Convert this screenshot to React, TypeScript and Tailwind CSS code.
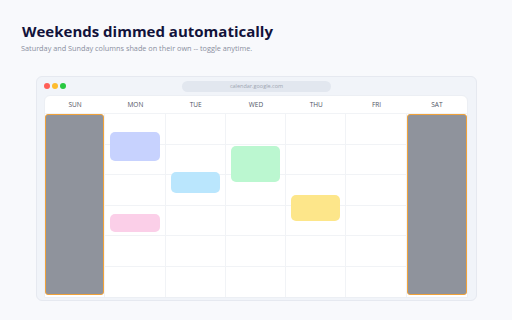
const days = ['SUN', 'MON', 'TUE', 'WED', 'THU', 'FRI', 'SAT']

type Ev = { day: number; top: number; height: number; color: string }

// top is measured from the top of the body grid
const events: Ev[] = [
  { day: 1, top: 18, height: 29, color: 'bg-[#c7d2fe]' },
  { day: 1, top: 100, height: 18, color: 'bg-[#fbcfe8]' },
  { day: 2, top: 58, height: 21, color: 'bg-[#bae6fd]' },
  { day: 3, top: 32, height: 36, color: 'bg-[#bbf7d0]' },
  { day: 4, top: 81, height: 26, color: 'bg-[#fde68a]' },
]

function DayColumn({ index }: { index: number }) {
  const weekend = index === 0 || index === 6
  return (
    <div className={`relative flex flex-col ${index < 6 ? 'border-r border-[#f1f3f6]' : ''}`}>
      {[0, 1, 2, 3, 4, 5].map((r) => (
        <div key={r} className={`h-[30.5px] ${r < 5 ? 'border-b border-[#f1f3f6]' : ''}`} />
      ))}
      {events
        .filter((e) => e.day === index)
        .map((e, i) => (
          <div
            key={i}
            className={`absolute left-[5px] right-[5px] rounded-[5px] ${e.color}`}
            style={{ top: e.top, height: e.height }}
          />
        ))}
      {weekend && (
        <div className="absolute inset-x-0 top-0 bottom-[2px] rounded-[3px] border border-[#f0a23a] bg-[#8f939c]" />
      )}
    </div>
  )
}

export default function App() {
  return (
    <div
      className="h-[320px] w-[512px] overflow-hidden bg-[#f8f9fc] pt-[21px]"
      style={{ fontFamily: '"Open Sans", sans-serif' }}
    >
      <div className="pl-[21px]">
        <h1 className="pl-[1px] text-[15px] font-bold leading-[20px] text-[#12123a]">
          Weekends dimmed automatically
        </h1>
        <p className="mt-[2px] text-[7.3px] leading-[10px] text-[#8a8fa0]">
          Saturday and Sunday columns shade on their own -- toggle anytime.
        </p>
      </div>

      <div className="ml-[36px] mt-[23px] flex h-[225px] w-[441px] flex-col rounded-[6px] border border-[#e6e9f0] bg-[#f1f4f9] pb-[4px] pl-[7px] pr-[8px]">
        <div className="flex h-[18px] shrink-0 items-center gap-[2.5px]">
          <span className="size-[5.5px] rounded-full bg-[#ff5f57]" />
          <span className="size-[5.5px] rounded-full bg-[#febc2e]" />
          <span className="size-[5.5px] rounded-full bg-[#28c840]" />
          <div className="ml-[114px] flex h-[11px] w-[149px] items-center justify-center rounded-full bg-[#e2e7ef] text-[5.5px] text-[#a0a6b2]">
            calendar.google.com
          </div>
        </div>

        <div className="flex flex-1 flex-col rounded-t-[6px] border border-[#eceff4] bg-white">
          <div className="grid h-[18px] shrink-0 grid-cols-7 border-b border-[#f1f3f6]">
            {days.map((d) => (
              <div key={d} className="flex items-center justify-center pt-[1px] text-[6.5px] text-[#4f5565]">
                {d}
              </div>
            ))}
          </div>
          <div className="grid flex-1 grid-cols-7">
            {days.map((d, i) => (
              <DayColumn key={d} index={i} />
            ))}
          </div>
        </div>
      </div>
    </div>
  )
}
